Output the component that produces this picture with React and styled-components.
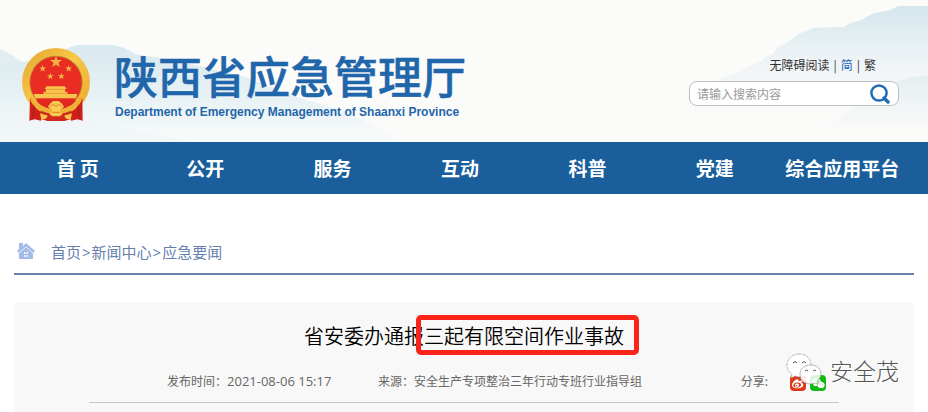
import React from 'react';
import styled, { createGlobalStyle } from 'styled-components';
import { FaWeibo, FaWeixin } from 'react-icons/fa';

const GlobalStyle = createGlobalStyle`
    * {
        box-sizing: border-box;
    }

    body {
        margin: 0;
        background: #fff;
        color: #333;
        font-family: "Noto Sans CJK SC", sans-serif;
        font-size: 12px;
    }

    a {
        color: inherit;
        text-decoration: none;
    }
`;

const Page = styled.div`
    display: flex;
    flex-direction: column;
    min-height: 100vh;
`;

const Header = styled.header`
    position: relative;
    display: flex;
    justify-content: space-between;
    align-items: flex-start;
    min-height: 142px;
    padding: 48px 29px 20px 22px;
    background: #fbfbf9;
`;

const Hills = styled.svg`
    position: absolute;
    bottom: 0;
    ${({ $side }) => $side}: 0;
`;

const Brand = styled.a`
    position: relative;
    display: flex;
    gap: 23px;
    color: #1f66ab;
`;

const SiteName = styled.h1`
    margin: 0;
    font-size: 44px;
    font-weight: 500;
    line-height: 54px;
    -webkit-text-stroke: 0.5px currentColor;
    white-space: nowrap;
`;

const SiteNameEn = styled.p`
    margin: 0;
    padding: 2px 0 0 1px;
    font-family: "Liberation Sans", Arial, sans-serif;
    font-size: 12px;
    font-weight: 700;
    line-height: 16px;
    white-space: nowrap;
`;

const Tools = styled.div`
    position: relative;
    display: flex;
    flex-direction: column;
    gap: 8px;
    width: 210px;
    padding-top: 8px;
`;

const ToolLinks = styled.div`
    display: flex;
    justify-content: flex-end;
    gap: 4px;
    padding-right: 23px;
    line-height: 17px;
`;

const ToolLink = styled.a`
    color: ${({ $active }) => ($active ? '#1a63bd' : '#333')};
`;

const SearchForm = styled.form`
    display: flex;
    align-items: center;
    height: 25px;
    padding: 0 8px 0 7px;
    background: #fff;
    border: 1px solid #bdbfc1;
    border-radius: 8px;
`;

const SearchInput = styled.input`
    flex: 1;
    min-width: 0;
    padding: 0;
    border: 0;
    outline: 0;
    background: transparent;
    font: inherit;

    &::placeholder {
        color: #999;
        opacity: 1;
    }
`;

const SearchButton = styled.button`
    display: flex;
    padding: 0;
    border: 0;
    background: none;
    cursor: pointer;
`;

const Nav = styled.nav`
    display: flex;
    padding: 0 22px 0 14px;
    background: #1a5f9c;
`;

const NavLink = styled.a`
    flex: 1 1 0;
    color: #fff;
    font-size: 19px;
    font-weight: 700;
    line-height: 52px;
    text-align: center;
    white-space: nowrap;
`;

const Main = styled.main`
    display: flex;
    flex: 1;
    flex-direction: column;
    padding: 36px 14px 0;
`;

const Breadcrumb = styled.nav`
    display: flex;
    align-items: center;
    gap: 16px;
    padding: 0 3px;
    height: 45px;
    border-bottom: 2px solid #6a83a8;
    color: #6680ad;
    font-size: 15px;
`;

const Separator = styled.span`
    padding: 0 1px;
    font-family: "Open Sans", "Noto Sans", sans-serif;
`;

const Article = styled.article`
    position: relative;
    flex: 1;
    margin-top: 27px;
    padding: 18px 75px 8px;
    background: #f8f8f8;
    border-radius: 6px 6px 0 0;
`;

const Title = styled.h2`
    margin: 0;
    color: #000;
    font-size: 20px;
    font-weight: 350;
    line-height: 32px;
    text-align: center;
`;

const Highlight = styled.span`
    position: relative;

    &::after {
        content: '';
        position: absolute;
        inset: -6px -15px -5px -8px;
        border: 5px solid #fb2418;
        border-radius: 5px;
    }
`;

const Meta = styled.div`
    display: grid;
    grid-template-columns: 32% 1fr auto;
    align-items: center;
    margin-top: 16px;
    padding: 0 13px 8px 78px;
    border-bottom: 1px solid #c8c8c8;
    color: #666;
    line-height: 26px;
    white-space: nowrap;
`;

const DateTime = styled.time`
    font-family: "Open Sans", "Noto Sans", sans-serif;
    font-size: 13px;
`;

const Share = styled.div`
    display: flex;
    align-items: center;
    gap: 4px;

    span {
        margin-right: 18px;
    }
`;

const ShareButton = styled.button`
    display: flex;
    align-items: center;
    justify-content: center;
    width: 16px;
    height: 16px;
    margin-top: 4px;
    padding: 0;
    border: 0;
    border-radius: 4px;
    background: ${({ $color }) => $color};
    color: #fff;
    cursor: pointer;
`;

const Watermark = styled.div`
    position: absolute;
    top: 51px;
    right: 15px;
    display: flex;
    align-items: center;
    gap: 8px;
    color: #555;
    font-size: 23px;
    font-weight: 300;
    line-height: 34px;
    text-shadow: 1px 1px 0 #fff;
    pointer-events: none;
`;

const navItems = ['首 页', '公开', '服务', '互动', '科普', '党建', '综合应用平台'];

const Star = ({ x, y, r }) => (
    <path
        transform={`translate(${x} ${y}) scale(${r})`}
        d="M0-1 .23-.31H.95L.37.12.59.81 0 .38-.59.81-.37.12-.95-.31H-.23Z"
        fill="#f5b544"
    />
);

const Emblem = () => (
    <svg width="69" height="74" viewBox="2 0 207 222" aria-hidden="true">
        <defs>
            <linearGradient id="gold" x1="0" y1="0" x2="1" y2="1">
                <stop offset="0" stopColor="#e3a32f" />
                <stop offset=".45" stopColor="#f8c848" />
                <stop offset="1" stopColor="#eda52d" />
            </linearGradient>
        </defs>
        <circle cx="104" cy="102" r="102" fill="url(#gold)" />
        <circle cx="104" cy="103" r="80" fill="#bd812d" />
        <circle cx="104" cy="103" r="77" fill="#e92d22" />
        <Star x={104} y={42} r={19} />
        <Star x={64} y={62} r={11} />
        <Star x={142} y={62} r={11} />
        <Star x={87} y={85} r={11} />
        <Star x={120} y={85} r={11} />
        <path d="M76 115H130L136 123H131V131H138V138H168L164 151H42L37 138H67V131H74V123H70Z" fill="#f8c64e" />
        <path d="M76 124H130M70 136H136" stroke="#d98a2b" strokeWidth="2" />
        <path d="M26 150Q40 172 62 186L66 206 58 218 40 214 24 218ZM183 150Q168 172 146 186L142 206 150 218 168 214 184 218Z" fill="#cf2119" />
        <path d="M44 156H164Q150 182 118 184L103 172 90 184Q58 180 44 156Z" fill="#e0281e" />
        <path d="M28 142Q54 180 96 184L80 201Q44 190 28 160ZM180 142Q154 180 112 184L128 201Q164 190 180 160Z" fill="#f0b038" />
        <path d="M58 188 80 196H128L150 188 146 214 130 219H78L62 214Z" fill="#d5281d" />
        <path d="M88 165 96 159H112L120 165 128 176 114 188 124 197 116 205H92L84 197 94 188 80 176Z" fill="#f8ca54" />
        <path d="M87 176 96 169 104 175 112 169 121 176M92 193H116" fill="none" stroke="#d98225" strokeWidth="3" />
        <path d="M56 196 80 203 73 212 60 215ZM152 196 128 203 135 212 148 215Z" fill="#f7c54d" />
        <path d="M38 172 35 206M170 172 173 206" stroke="#a81813" strokeWidth="3" />
    </svg>
);

const LeftHills = () => (
    <Hills $side="left" width="400" height="142" viewBox="0 0 400 142" aria-hidden="true">
        <defs>
            <linearGradient id="leftHill" x1="0" y1="0" x2="0" y2="1">
                <stop offset="0" stopColor="#d9e9ef" />
                <stop offset=".5" stopColor="#e6f1f4" />
                <stop offset="1" stopColor="#f9fbfa" />
            </linearGradient>
        </defs>
        <path d="M0 49 12 55 22 62 40 70 80 100 180 142H0Z" fill="#e2edf0" />
        <path d="M0 66 22 62 50 58 70 47 78 45H113L124 48 135 54 160 58 200 66 245 77 278 90 300 98 330 107 358 118 380 128 400 142H0Z" fill="url(#leftHill)" />
        <path d="M0 104Q60 112 105 125L195 142H0Z" fill="#edf4f5" opacity=".5" />
    </Hills>
);

const RightHills = () => (
    <Hills $side="right" width="240" height="142" viewBox="0 0 240 142" aria-hidden="true">
        <defs>
            <linearGradient id="rightHill" x1="0" y1="0" x2="0" y2="1">
                <stop offset="0" stopColor="#d5e7ed" />
                <stop offset=".5" stopColor="#eff4f6" />
                <stop offset="1" stopColor="#fbfbf9" />
            </linearGradient>
            <linearGradient id="rightRidge" x1="0" y1="0" x2="0" y2="1">
                <stop offset="0" stopColor="#e4eef1" />
                <stop offset="1" stopColor="#fbfbf9" />
            </linearGradient>
        </defs>
        <path d="M240 6H210L203 10 186 13 171 21 162 23 156 27 126 28 111 34 97 44 90 47 85 54 77 57 74 61 65 64 51 72 30 80 0 90V120H240Z" fill="url(#rightHill)" />
        <path d="M240 76 224 77 208 82 190 96 160 112 130 132H240Z" fill="url(#rightRidge)" />
    </Hills>
);

const HomeIcon = () => (
    <svg width="18" height="17" viewBox="0 0 18 17" aria-hidden="true">
        <path d="M2 0H6V3L9 0 18 8 16 10V16H2V10L0 8 2 6Z" fill="#a3bbe9" />
        <path d="M2 10 9 4 16 10" fill="none" stroke="#e4ecfa" />
        <path d="M7 9H8.500V11H7ZM9.500 9H11V11H9.500ZM7 12H8.500V14H7ZM9.500 12H11V14H9.500Z" fill="#f2f6fd" />
    </svg>
);

const SearchIcon = () => (
    <svg width="20" height="20" viewBox="0 0 20 20" fill="none" stroke="#216db5" aria-hidden="true">
        <circle cx="9" cy="9" r="7.600" strokeWidth="2.500" />
        <path d="m14 14 4 4" strokeWidth="3.500" strokeLinecap="round" />
    </svg>
);

const ChatBubbles = () => (
    <svg width="38" height="34" viewBox="0 0 38 34" fill="#fff" stroke="#999" strokeWidth=".7" aria-hidden="true">
        <path d="M15 1C8 1 3 6 3 12c0 4 2 7 5 9l-1 4 4-2 4 1c7 0 12-5 12-12S22 1 15 1Z" strokeDasharray="3 1" />
        <path d="M27 12c-7 0-11 4-11 9s4 10 11 10l4-1 3 1-1-3c2-2 4-4 4-7 0-5-4-9-10-9Z" fillOpacity=".85" />
        <path d="M9 10q2-3 4 0M18 10q2-3 4 0M21 18q2-2 3 0M29 18q2-2 3 0" fill="none" stroke="#555" strokeWidth="1" />
    </svg>
);

const App = () => (
    <>
        <GlobalStyle />
        <Page>
            <Header>
                <LeftHills />
                <RightHills />
                <Brand href="#">
                    <Emblem />
                    <div>
                        <SiteName>陕西省应急管理厅</SiteName>
                        <SiteNameEn>Department of Emergency Management of Shaanxi Province</SiteNameEn>
                    </div>
                </Brand>
                <Tools>
                    <ToolLinks>
                        <ToolLink href="#">无障碍阅读</ToolLink>
                        <span>|</span>
                        <ToolLink href="#" $active>简</ToolLink>
                        <span>|</span>
                        <ToolLink href="#">繁</ToolLink>
                    </ToolLinks>
                    <SearchForm onSubmit={(e) => e.preventDefault()}>
                        <SearchInput type="text" placeholder="请输入搜索内容" aria-label="请输入搜索内容" />
                        <SearchButton type="submit" aria-label="搜索">
                            <SearchIcon />
                        </SearchButton>
                    </SearchForm>
                </Tools>
            </Header>

            <Nav>
                {navItems.map((item) => (
                    <NavLink key={item} href="#">{item}</NavLink>
                ))}
            </Nav>

            <Main>
                <Breadcrumb>
                    <HomeIcon />
                    <div>
                        <a href="#">首页</a>
                        <Separator>&gt;</Separator>
                        <a href="#">新闻中心</a>
                        <Separator>&gt;</Separator>
                        <a href="#">应急要闻</a>
                    </div>
                </Breadcrumb>

                <Article>
                    <Title>
                        省安委办通报<Highlight>三起有限空间作业事故</Highlight>
                    </Title>
                    <Meta>
                        <div>发布时间：<DateTime dateTime="2021-08-06T15:17">2021-08-06 15:17</DateTime></div>
                        <div>来源：安全生产专项整治三年行动专班行业指导组</div>
                        <Share>
                            <span>分享:</span>
                            <ShareButton type="button" $color="#dd3a1c" aria-label="微博">
                                <FaWeibo size={13} />
                            </ShareButton>
                            <ShareButton type="button" $color="#13b813" aria-label="微信">
                                <FaWeixin size={13} />
                            </ShareButton>
                        </Share>
                    </Meta>
                    <Watermark>
                        <ChatBubbles />
                        安全茂
                    </Watermark>
                </Article>
            </Main>
        </Page>
    </>
);

export default App;
